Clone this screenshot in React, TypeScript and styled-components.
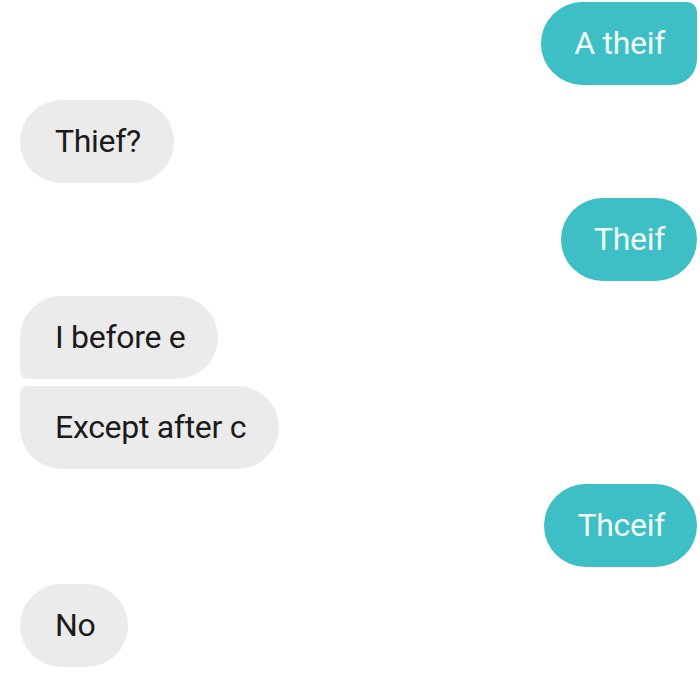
import React from "react";
import styled, { createGlobalStyle, css } from "styled-components";

const Global = createGlobalStyle`
  html, body { margin: 0; padding: 0; background: #ffffff; }
  body { font-family: Roboto, "Noto Sans", sans-serif; }
`;

const Thread = styled.div`
  width: 700px;
  height: 680px;
  box-sizing: border-box;
  padding: 2px 3px 0 20px;
  display: flex;
  flex-direction: column;
  overflow: hidden;
  background: #ffffff;
`;

type Side = "in" | "out";
type Shape = "pill" | "top" | "groupFirst" | "groupLast";

const Row = styled.div<{ $side: Side; $gap: number }>`
  display: flex;
  justify-content: ${(p) => (p.$side === "out" ? "flex-end" : "flex-start")};
  margin-top: ${(p) => p.$gap}px;
`;

const radii: Record<Shape, string> = {
  pill: "42px",
  top: "42px 10px 26px 42px",
  groupFirst: "42px 42px 42px 8px",
  groupLast: "8px 42px 42px 42px",
};

const Bubble = styled.div<{ $side: Side; $shape: Shape }>`
  height: 83px;
  box-sizing: border-box;
  display: flex;
  align-items: center;
  font-size: 32px;
  letter-spacing: -0.3px;
  border-radius: ${(p) => radii[p.$shape]};
  ${(p) =>
    p.$side === "out"
      ? css`
          padding: 0 32px 2px 33px;
          background: #3ebec5;
          color: #effdfd;
        `
      : css`
          padding: 0 33px 2px 35px;
          background: #ebebeb;
          color: #1b1b1b;
        `}
`;

const messages: { text: string; side: Side; shape: Shape; gap: number }[] = [
  { text: "A theif", side: "out", shape: "top", gap: 0 },
  { text: "Thief?", side: "in", shape: "pill", gap: 15 },
  { text: "Theif", side: "out", shape: "pill", gap: 15 },
  { text: "I before e", side: "in", shape: "groupFirst", gap: 15 },
  { text: "Except after c", side: "in", shape: "groupLast", gap: 7 },
  { text: "Thceif", side: "out", shape: "pill", gap: 15 },
  { text: "No", side: "in", shape: "pill", gap: 17 },
];

export default function App() {
  return (
    <>
      <Global />
      <Thread>
        {messages.map((m, i) => (
          <Row key={i} $side={m.side} $gap={m.gap}>
            <Bubble $side={m.side} $shape={m.shape}>
              {m.text}
            </Bubble>
          </Row>
        ))}
      </Thread>
    </>
  );
}
